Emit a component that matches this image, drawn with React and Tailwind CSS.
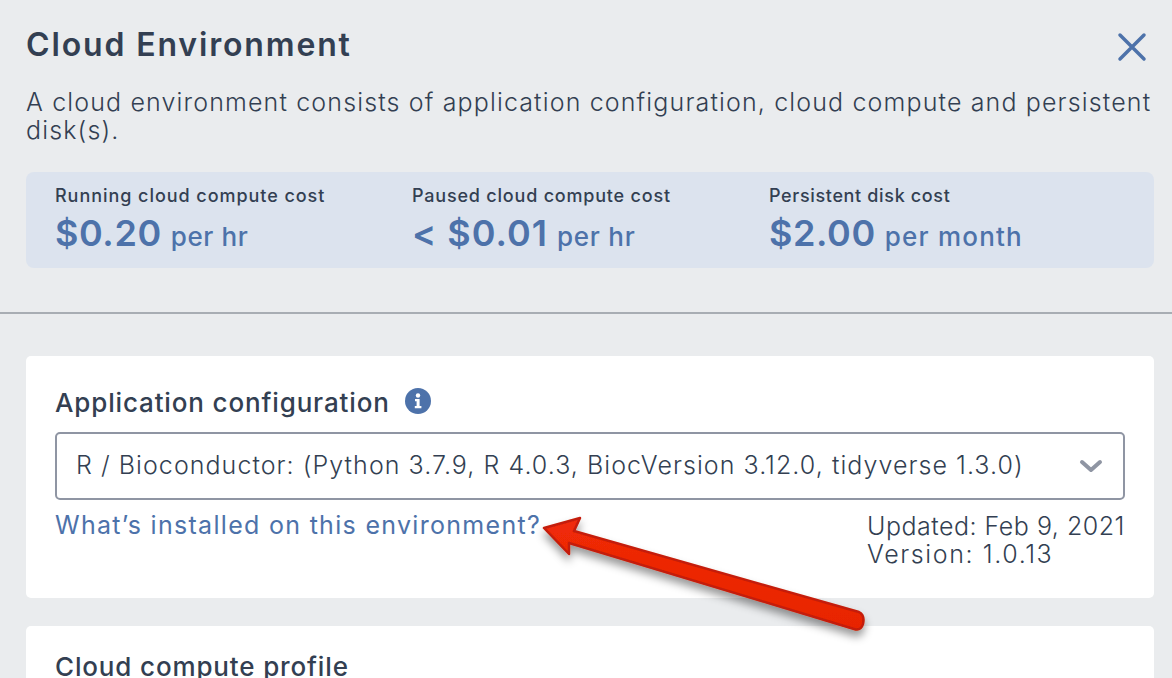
import React from "react";

const font = { fontFamily: '"Inter", "Noto Sans", sans-serif' };

const Stat = ({ label, value, unit, labelClass, valueClass, unitClass }) => (
  <div className="w-[357px]">
    <div className={`text-[18px] leading-[22px] font-medium text-[#333f52] ${labelClass}`}>{label}</div>
    <div className="mt-[4px] -mb-[3px] flex items-baseline gap-[9px] text-[#4d72aa]">
      <span className={`text-[36px] leading-[44px] font-semibold ${valueClass}`}>{value}</span>
      <span className={`text-[26px] leading-[44px] font-medium ${unitClass}`}>{unit}</span>
    </div>
  </div>
);

const Arrow = () => (
  <svg className="absolute left-0 top-0 pointer-events-none" width="1172" height="678" viewBox="0 0 1172 678">
    <defs>
      <filter id="arrowShadow" x="-10%" y="-20%" width="120%" height="150%">
        <feDropShadow dx="0" dy="6" stdDeviation="4" floodColor="#000" floodOpacity="0.4" />
      </filter>
      <linearGradient id="arrowFill" x1="0" y1="0" x2="0" y2="1">
        <stop offset="0" stopColor="#f02a08" />
        <stop offset="1" stopColor="#e82400" />
      </linearGradient>
    </defs>
    <path
      d="M544 528 L580 518 L574 531 L859 612 Q865 615 863 624 Q861 631 854 629 L569 543 L569 554 Z"
      fill="url(#arrowFill)"
      stroke="#c41f08"
      strokeWidth="2.5"
      strokeLinejoin="round"
      filter="url(#arrowShadow)"
    />
  </svg>
);

export default function App() {
  return (
    <div className="relative h-[678px] w-[1172px] overflow-hidden bg-[#eaecee]" style={font}>
      {/* Header */}
      <div className="pl-[26px] pr-[18px] pt-[24px] pb-[44px] border-b-2 border-[#a8adb3]">
        <div className="flex items-start justify-between">
          <h1 className="text-[32px] leading-[42px] font-semibold tracking-[1.85px] text-[#333f52]">Cloud Environment</h1>
          <svg className="mt-[8px] mr-[7px]" width="30" height="30" viewBox="0 0 30 30" fill="none" stroke="#4d72aa" strokeWidth="3.5" strokeLinecap="round">
            <path d="M3 3 L27 27 M27 3 L3 27" />
          </svg>
        </div>
        <p className="mt-[22px] text-[25px] leading-[28px] font-[350] tracking-[1.14px] text-[#333f52]">
          A cloud environment consists of application configuration, cloud compute and persistent disk(s).
        </p>
        <div className="mt-[28px] flex h-[96px] items-center rounded-[8px] bg-[#dce3ee] pl-[29px]">
          <Stat
            label="Running cloud compute cost"
            value="$0.20"
            unit="per hr"
            labelClass="tracking-[0.95px]"
            valueClass="tracking-[0.6px]"
            unitClass="tracking-[0.6px]"
          />
          <Stat
            label="Paused cloud compute cost"
            value="< $0.01"
            unit="per hr"
            labelClass="tracking-[0.8px]"
            valueClass="tracking-[1px]"
            unitClass="tracking-[0.75px]"
          />
          <Stat
            label="Persistent disk cost"
            value="$2.00"
            unit="per month"
            labelClass="tracking-[0.65px]"
            valueClass="tracking-[0.6px]"
            unitClass="tracking-[1.2px]"
          />
        </div>
      </div>

      {/* Cards */}
      <div className="pl-[26px] pr-[18px] pt-[42px] flex flex-col gap-[28px]">
        <div className="h-[242px] rounded-[5px] bg-white px-[29px] pt-[29px]">
          <div className="flex items-center gap-[15px]">
            <span className="text-[26px] leading-[36px] font-medium tracking-[0.85px] text-[#333f52]">Application configuration</span>
            <svg className="-mt-[4px]" width="26" height="26" viewBox="0 0 26 26">
              <circle cx="13" cy="13" r="13" fill="#4d72aa" />
              <circle cx="13" cy="7.5" r="2.2" fill="#fff" />
              <path d="M10 11h4.6v7H16.4v2.2H9.8V18h1.8v-4.8H10z" fill="#fff" />
            </svg>
          </div>
          <div className="mt-[11px] flex h-[68px] items-center justify-between rounded-[5px] border-2 border-[#8f95a3] pl-[19px] pr-[20px]">
            <span className="text-[25px] font-[350] tracking-[1.05px] text-[#333f52] whitespace-nowrap">
              R / Bioconductor: (Python 3.7.9, R 4.0.3, BiocVersion 3.12.0, tidyverse 1.3.0)
            </span>
            <svg width="24" height="16" viewBox="0 0 24 16" fill="none" stroke="#8f95a3" strokeWidth="4" strokeLinecap="round" strokeLinejoin="round">
              <path d="M3 4 L12 12 L21 4" />
            </svg>
          </div>
          <div className="mt-[9px] flex items-start justify-between">
            <a className="text-[25px] leading-[32px] tracking-[1.3px] text-[#4d72aa]">What’s installed on this environment?</a>
            <div className="text-[25px] leading-[28px] font-[350] text-[#333f52] mt-[3px] w-[258px] whitespace-nowrap">
              <div className="tracking-[0.5px]">Updated: Feb 9, 2021</div>
              <div className="tracking-[1.6px]">Version: 1.0.13</div>
            </div>
          </div>
        </div>
        <div className="h-[52px] rounded-t-[5px] bg-white px-[29px] pt-[30px]">
          <div className="text-[26px] leading-[22px] font-medium tracking-[0.85px] text-[#333f52]">Cloud compute profile</div>
        </div>
      </div>

      <Arrow />
    </div>
  );
}
